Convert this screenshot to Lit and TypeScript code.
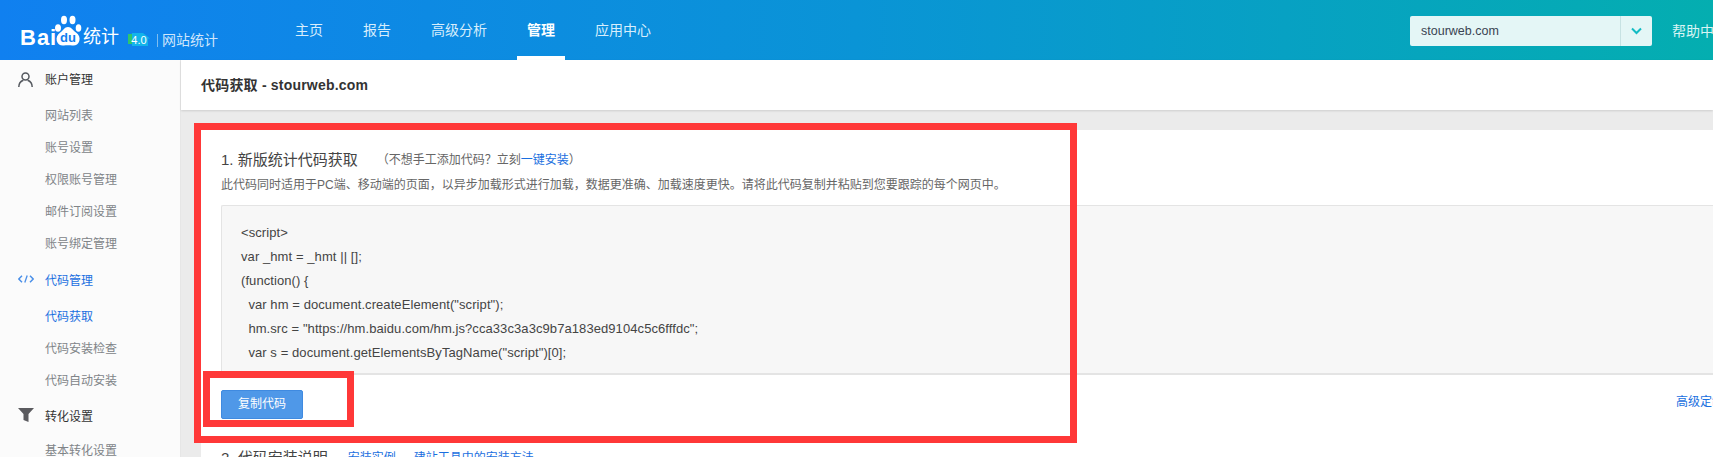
import { LitElement, html, css, svg } from "lit";
import { customElement } from "lit/decorators.js";

const nav = ["主页", "报告", "高级分析", "管理", "应用中心"];

const userIcon = svg`<circle cx="7.500" cy="4.500" r="3.500" fill="none" stroke="#55595f" stroke-width="1.500"/><path d="M.8 15c0-3.800 2.200-6 4.600-6.800M14.200 15c0-3.800-2.200-6-4.600-6.800" fill="none" stroke="#55595f" stroke-width="1.500"/>`;
const codeIcon = svg`<path d="M4 .8.800 4 4 7.200M12 .8 15.200 4 12 7.200" fill="none" stroke="#4a8fe8" stroke-width="1.500"/><path d="M9.200.5 6.800 7.500" stroke="#4a8fe8" stroke-width="1.300"/>`;
const funnelIcon = svg`<path d="M0 0h16l-5.500 6v8l-5-2V6z" fill="#5b5b5f"/>`;

@customElement("app-root")
export class AppRoot extends LitElement {
  static styles = css`
    :host { display: block; width: 1713px; height: 457px; overflow: hidden; position: relative; background: #fff;
      font-family: "Liberation Sans", "Noto Sans CJK SC", sans-serif; font-size: 12px; color: #333; }
    a { color: #1a6fe0; text-decoration: none; }
    header { height: 60px; display: flex; align-items: stretch; background: linear-gradient(90deg, #1080f0 0%, #0a94d6 50%, #04aeb0 100%); color: #fff; }
    .logo { width: 275px; flex: none; display: flex; align-items: flex-start; padding-left: 20px; box-sizing: border-box; }
    .bai { font-family: "Liberation Sans", sans-serif; font-weight: 700; font-size: 22px; letter-spacing: 1px; line-height: 24px; margin-top: 26px; width: 33px; flex: none; }
    .paw { width: 30px; height: 32px; flex: none; margin-top: 15px; }
    .tj { font-size: 18px; line-height: 24px; margin-top: 25px; flex: none; }
    .badge { width: 22px; height: 13px; margin: 33px 0 0 9px; flex: none; }
    .site { margin: 34px 0 0 7px; padding-left: 4px; border-left: 1px solid #7fbdf0; font-size: 14px; line-height: 13px; height: 13px; color: #cfe6fb; white-space: nowrap; }
    nav { display: flex; }
    .ni { padding: 0 20px; font-size: 14px; line-height: 60px; color: #d8eefc; position: relative; box-sizing: border-box; }
    .ni.on { color: #fff; font-weight: 700; }
    .ni.on::after { content: ""; position: absolute; left: 10px; right: 10px; bottom: 0; height: 4px; background: #fff; }
    .right { margin-left: auto; display: flex; align-items: center; }
    .sel { width: 242px; height: 30px; display: flex; background: #e4f6f6; border-radius: 2px; margin-top: 1px; }
    .sel span { flex: 1; padding-left: 11px; line-height: 30px; color: #3a4452; font-size: 12.500px; }
    .sel i { width: 31px; border-left: 1px solid #c7e2e3; display: flex; align-items: center; justify-content: center; }
    .help { margin-left: 20px; width: 41px; overflow: hidden; white-space: nowrap; font-size: 14px; color: #d8f4f4; flex: none; }
    .body { display: flex; height: 397px; }
    aside { width: 181px; flex: none; background: #fbfbfb; border-right: 1px solid #e6e6e6; box-sizing: border-box; overflow: hidden; padding-top: 4px; }
    .g { display: flex; align-items: center; height: 32px; padding: 0 0 4px 18px; box-sizing: border-box; color: #333; font-size: 12px; }
    .g + .s { margin-top: 4px; }
    .s + .g { margin-top: 5px; }
    .s + .g.tight { margin-top: 4px; }
    .g.tight + .s { margin-top: 2px; }
    .g i { width: 27px; flex: none; display: flex; }
    .g i.u { margin-top: 4px; }
    .g.blue { color: #1a6fe0; }
    .s { height: 32px; line-height: 32px; padding-left: 45px; color: #808488; font-size: 12px; }
    .s.blue { color: #1a6fe0; }
    main { flex: 1; min-width: 0; background: #ebebeb; }
    .title { height: 50px; background: #fff; box-shadow: 0 1px 2px rgba(0,0,0,.12); padding-left: 20px; line-height: 50px; font-size: 14px; letter-spacing: .2px; font-weight: 700; color: #333; position: relative; }
    .card { margin: 20px 0 0 20px; background: #fff; height: 327px; padding: 20px 0 0 20px; box-sizing: border-box; position: relative; }
    .h { font-size: 15px; line-height: 20px; color: #444; display: flex; }
    .h small { font-size: 12px; margin-left: 19px; color: #666; }
    .d { margin-top: 6px; line-height: 18px; color: #666; font-size: 12px; white-space: nowrap; }
    .code { margin-top: 11px; height: 170px; background: #f7f7f7; border: 1px solid #e4e4e4; border-width: 1px 0 2px 1px; border-radius: 2px 0 0 0; padding: 15px 0 0 19px; box-sizing: border-box; font-size: 13px; letter-spacing: .08px; color: #444; line-height: 24px; overflow: hidden; }
    .code div { white-space: pre; }
    .bar { display: flex; justify-content: space-between; margin-top: 15px; align-items: flex-start; }
    .btn { width: 82px; height: 29px; background: #4f98e8; border: 1px solid #3f8ae0; border-radius: 2px; color: #fff; font-size: 12px; line-height: 27px; text-align: center; box-sizing: border-box; }
    .h2 { position: absolute; left: 20px; top: 318px; font-size: 15px; line-height: 20px; color: #444; white-space: nowrap; display: flex; }
    .h2 a { font-size: 12px; margin-left: 18px; }
    .h2 a:first-of-type { margin-left: 20px; }
    .adv { white-space: nowrap; margin: 3px -11px 0 0; font-size: 12px; line-height: 18px; flex: none; }
    .mark { position: absolute; border: 7px solid #ff3838; box-sizing: border-box; pointer-events: none; }
    .m1 { left: 194px; top: 123px; width: 883px; height: 320px; }
    .m2 { left: 203px; top: 371px; width: 151px; height: 56px; }
  `;

  render() {
    return html`
      <header>
        <div class="logo">
          <span class="bai">Bai</span>
          <svg class="paw" viewBox="0 0 30 32">
            <ellipse cx="5" cy="13" rx="3" ry="3.800" fill="#fff"/>
            <ellipse cx="11" cy="5" rx="3" ry="4.200" fill="#fff"/>
            <ellipse cx="19.500" cy="5" rx="3" ry="4.200" fill="#fff"/>
            <ellipse cx="25.500" cy="13" rx="2.800" ry="3.800" fill="#fff"/>
            <path d="M15 12c3.500 0 5 3.500 8 5.500 3 2.200 4.200 5 3.300 8.500-1 3.500-4 5-7 4.500-3-.4-5.500-.4-8.500 0-3 .5-6-1-7-4.500-.8-3.500.5-6.300 3.500-8.500 3-2 4-5.500 7.700-5.500z" fill="#fff"/>
            <text x="15" y="27" text-anchor="middle" font-family="Liberation Sans, sans-serif" font-weight="700" font-size="13" fill="#1080f0">du</text>
          </svg>
          <span class="tj">统计</span>
          <svg class="badge" viewBox="0 0 22 13">
            <rect x="0" y="1" width="7" height="10" fill="#2ec66e"/>
            <path d="M4 0h11l7 5.500h-2V13H4z" fill="#12b4ea"/>
            <text x="11" y="11" text-anchor="middle" font-family="Liberation Sans, sans-serif" font-size="11" fill="#fff">4.0</text>
          </svg>
          <span class="site">网站统计</span>
        </div>
        <nav>${nav.map((n, i) => html`<div class="ni ${i === 3 ? "on" : ""}">${n}</div>`)}</nav>
        <div class="right">
          <div class="sel"><span>stourweb.com</span><i><svg width="11" height="8" viewBox="0 0 11 8"><path d="M1 1.500l4.500 4.500L10 1.500" fill="none" stroke="#12bcc4" stroke-width="2"/></svg></i></div>
          <div class="help">帮助中心</div>
        </div>
      </header>
      <div class="body">
        <aside>
          <div class="g"><i class="u"><svg width="15" height="16" viewBox="0 0 15 16">${userIcon}</svg></i>账户管理</div>
          <div class="s">网站列表</div>
          <div class="s">账号设置</div>
          <div class="s">权限账号管理</div>
          <div class="s">邮件订阅设置</div>
          <div class="s">账号绑定管理</div>
          <div class="g blue"><i><svg width="16" height="8" viewBox="0 0 16 8">${codeIcon}</svg></i>代码管理</div>
          <div class="s blue">代码获取</div>
          <div class="s">代码安装检查</div>
          <div class="s">代码自动安装</div>
          <div class="g tight"><i><svg width="16" height="14" viewBox="0 0 16 14">${funnelIcon}</svg></i>转化设置</div>
          <div class="s">基本转化设置</div>
        </aside>
        <main>
          <div class="title">代码获取 - stourweb.com</div>
          <div class="card">
            <div class="h">1. 新版统计代码获取<small>（不想手工添加代码？立刻<a href="#">一键安装</a>）</small></div>
            <div class="d">此代码同时适用于PC端、移动端的页面，以异步加载形式进行加载，数据更准确、加载速度更快。请将此代码复制并粘贴到您要跟踪的每个网页中。</div>
            <div class="code">
              <div>&lt;script&gt;</div>
              <div>var _hmt = _hmt || [];</div>
              <div>(function() {</div>
              <div>  var hm = document.createElement("script");</div>
              <div>  hm.src = "https://hm.baidu.com/hm.js?cca33c3a3c9b7a183ed9104c5c6fffdc";</div>
              <div>  var s = document.getElementsByTagName("script")[0];</div>
            </div>
            <div class="bar"><div class="btn">复制代码</div><a class="adv" href="#">高级定制</a></div>
            <div class="h2">2. 代码安装说明<a href="#">安装实例</a><a href="#">建站工具中的安装方法</a></div>
          </div>
        </main>
      </div>
      <div class="mark m1"></div>
      <div class="mark m2"></div>
    `;
  }
}
